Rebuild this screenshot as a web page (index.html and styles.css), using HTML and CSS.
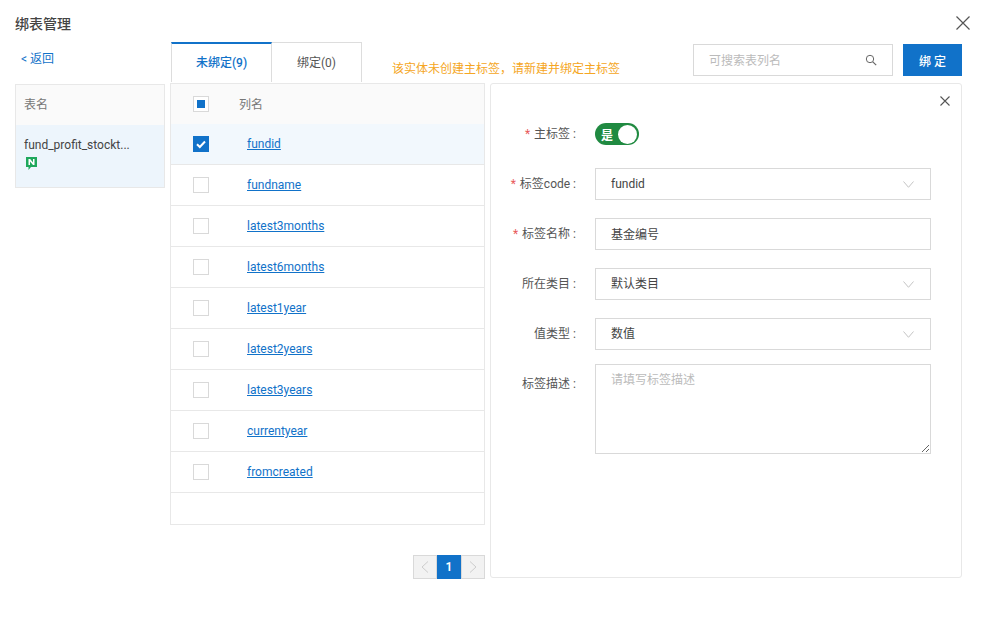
FILE: index.html
```html
<!DOCTYPE html>
<html lang="zh-CN">
<head>
  <meta charset="UTF-8">
  <title>绑表管理</title>
  <link rel="stylesheet" href="styles.css">
</head>
<body>

  <div class="dialog">
    <div class="dialog-head">
      <span class="dialog-title">绑表管理</span>
      <svg class="dialog-close" width="14" height="14" viewBox="0 0 14 14"><path d="M.5.5l13 13M13.5.5l-13 13" fill="none" stroke="#555" stroke-width="1.2"/></svg>
    </div>

    <div class="dialog-body">
      <div class="side">
        <a class="back-link">&lt; 返回</a>
        <div class="side-table">
          <div class="side-head">表名</div>
          <div class="side-row">
            <div class="side-name">fund_profit_stockt...</div>
            <svg class="side-icon" width="11" height="13" viewBox="0 0 11 13">
              <path d="M0 0h11v10H5l-2.500 3V10H0z" fill="#1fa85c"/>
              <path d="M2.500 8V2h1.700L7 5.400V2h1.500v6H7L4 4.500V8z" fill="#fff"/>
            </svg>
          </div>
        </div>
      </div>

      <div class="main">
        <div class="toolbar">
          <div class="tabs">
            <div class="tab active">未绑定(9)</div>
            <div class="tab">绑定(0)</div>
          </div>
          <span class="warning">该实体未创建主标签，请新建并绑定主标签</span>
          <div class="search">
            <span class="search-text">可搜索表列名</span>
            <svg width="12" height="12" viewBox="0 0 12 12"><circle cx="5" cy="5" r="3.700" fill="none" stroke="#666" stroke-width="1"/><path d="M7.800 7.800l3.400 3.400" stroke="#666" stroke-width="1.200"/></svg>
          </div>
          <button class="bind-btn">绑 定</button>
        </div>

        <div class="columns">
          <div class="list">
            <div class="list-table">
              <div class="list-head">
                <span class="check partial"></span>
                <span class="head-name">列名</span>
              </div>
              <div class="list-row selected">
                <span class="check checked">
                  <svg width="16" height="16" viewBox="0 0 16 16"><path d="M4 8.300l2.800 2.700L12 5.500" fill="none" stroke="#fff" stroke-width="2"/></svg>
                </span>
                <a class="col-link">fundid</a>
              </div>
              <div class="list-row"><span class="check"></span><a class="col-link">fundname</a></div>
              <div class="list-row"><span class="check"></span><a class="col-link">latest3months</a></div>
              <div class="list-row"><span class="check"></span><a class="col-link">latest6months</a></div>
              <div class="list-row"><span class="check"></span><a class="col-link">latest1year</a></div>
              <div class="list-row"><span class="check"></span><a class="col-link">latest2years</a></div>
              <div class="list-row"><span class="check"></span><a class="col-link">latest3years</a></div>
              <div class="list-row"><span class="check"></span><a class="col-link">currentyear</a></div>
              <div class="list-row"><span class="check"></span><a class="col-link">fromcreated</a></div>
            </div>
            <div class="pager">
              <span class="page-btn"><svg width="8" height="12" viewBox="0 0 8 12"><path d="M7 .5L1 6l6 5.500" fill="none" stroke="#ccc"/></svg></span>
              <span class="page-btn current">1</span>
              <span class="page-btn"><svg width="8" height="12" viewBox="0 0 8 12"><path d="M1 .5L7 6l-6 5.500" fill="none" stroke="#ccc"/></svg></span>
            </div>
          </div>

          <div class="panel">
            <svg class="panel-close" width="10" height="10" viewBox="0 0 10 10"><path d="M.5.5l9 9M9.500.5l-9 9" fill="none" stroke="#555" stroke-width="1.100"/></svg>
            <div class="form">
              <div class="form-row switch-row">
                <label class="form-label"><em>*</em>主标签 :</label>
                <div class="switch"><span>是</span><i></i></div>
              </div>
              <div class="form-row">
                <label class="form-label"><em>*</em>标签code :</label>
                <div class="select">fundid
                  <svg width="11" height="7" viewBox="0 0 11 7"><path d="M.5.500L5.500 6.300 10.500.5" fill="none" stroke="#c4c4c4"/></svg>
                </div>
              </div>
              <div class="form-row">
                <label class="form-label"><em>*</em>标签名称 :</label>
                <input class="text-input" value="基金编号">
              </div>
              <div class="form-row">
                <label class="form-label">所在类目 :</label>
                <div class="select">默认类目
                  <svg width="11" height="7" viewBox="0 0 11 7"><path d="M.5.500L5.500 6.300 10.500.5" fill="none" stroke="#c4c4c4"/></svg>
                </div>
              </div>
              <div class="form-row">
                <label class="form-label">值类型 :</label>
                <div class="select">数值
                  <svg width="11" height="7" viewBox="0 0 11 7"><path d="M.5.500L5.500 6.300 10.500.5" fill="none" stroke="#c4c4c4"/></svg>
                </div>
              </div>
              <div class="form-row area-row">
                <label class="form-label">标签描述 :</label>
                <textarea class="text-area" placeholder="请填写标签描述"></textarea>
              </div>
            </div>
          </div>
        </div>
      </div>
    </div>
  </div>

</body>
</html>
```

FILE: styles.css
```css
* {
  box-sizing: border-box;
}

body {
  margin: 0;
  background: #fff;
  color: #555;
  font-family: Roboto, "Noto Sans CJK SC", sans-serif;
  font-size: 12px;
}

.dialog {
  width: 982px;
  height: 633px;
  padding: 0 20px 0 15px;
  overflow: hidden;
}

.dialog-head {
  height: 42px;
  display: flex;
  align-items: center;
  justify-content: space-between;
  padding-top: 3px;
}

.dialog-title {
  font-size: 14px;
  font-weight: 500;
  color: #444;
}

.dialog-close {
  margin-right: -8px;
  margin-top: 1px;
}

.dialog-body {
  display: flex;
  gap: 5px;
}

.side {
  width: 150px;
  flex: none;
}

.back-link {
  display: block;
  height: 42px;
  padding: 9px 0 0 6px;
  line-height: 16px;
  color: #1172c9;
}

.side-table {
  border: 1px solid #e8e8e8;
}

.side-head {
  height: 40px;
  line-height: 40px;
  padding-left: 8px;
  background: #fafafa;
  color: #777;
}

.side-row {
  height: 62px;
  padding: 12px 8px 0;
  background: #edf5fc;
  color: #444;
}

.side-name {
  line-height: 16px;
}

.side-icon {
  display: block;
  margin: 4px 0 0 2px;
}

.main {
  width: 792px;
  flex: none;
}

.toolbar {
  height: 41px;
  display: flex;
  align-items: flex-start;
}

.tabs {
  display: flex;
  height: 40px;
  margin-left: 1px;
}

.tab {
  width: 90px;
  border: 1px solid #ddd;
  border-bottom: 0;
  border-left: 0;
  text-align: center;
  line-height: 40px;
}

.tab.active {
  width: 101px;
  border-left: 1px solid #ddd;
  border-top: 2px solid #1172c9;
  line-height: 38px;
  color: #1172c9;
  font-weight: 500;
}

.warning {
  margin: 19px 0 0 30px;
  line-height: 16px;
  color: #f5a623;
}

.search {
  width: 200px;
  height: 32px;
  margin: 2px 0 0 auto;
  padding: 0 15px 0 15px;
  display: flex;
  align-items: center;
  justify-content: space-between;
  border: 1px solid #d9d9d9;
}

.search-text {
  margin-top: -2px;
  color: #bbb;
}

.bind-btn {
  width: 59px;
  height: 32px;
  margin: 2px 0 0 10px;
  border: 0;
  padding: 0;
  background: #1172c9;
  color: #fff;
  font: inherit;
  font-weight: 500;
}

.columns {
  display: flex;
  gap: 5px;
}

.list {
  width: 315px;
  flex: none;
}

.list-table {
  height: 442px;
  border: 1px solid #e8e8e8;
}

.list-head,
.list-row {
  display: flex;
  align-items: center;
  padding-left: 22px;
}

.list-head {
  height: 40px;
  background: #fafafa;
  color: #777;
}

.list-row {
  height: 41px;
  border-bottom: 1px solid #e8e8e8;
}

.list-row.selected {
  background: #f2f8fd;
}

.check {
  width: 16px;
  height: 16px;
  flex: none;
  display: flex;
  align-items: center;
  justify-content: center;
  border: 1px solid #d9d9d9;
  background: #fff;
}

.check.partial::after {
  content: "";
  width: 8px;
  height: 8px;
  background: #1172c9;
}

.check.checked {
  border: 0;
  background: #1172c9;
}

.head-name {
  margin: -2px 0 0 30px;
}

.col-link {
  margin-left: 38px;
  color: #1172c9;
  text-decoration: underline;
}

.pager {
  display: flex;
  justify-content: flex-end;
  margin-top: 30px;
}

.page-btn {
  width: 24px;
  height: 24px;
  display: flex;
  align-items: center;
  justify-content: center;
  border: 1px solid #d9d9d9;
  background: #f2f2f2;
}

.page-btn.current {
  border: 0;
  background: #1172c9;
  color: #fff;
  font-weight: 600;
}

.panel {
  position: relative;
  width: 472px;
  height: 495px;
  flex: none;
  padding-top: 38px;
  border: 1px solid #e8e8e8;
  border-radius: 3px;
}

.panel-close {
  position: absolute;
  top: 12px;
  right: 11px;
}

.form {
  display: flex;
  flex-direction: column;
  gap: 18px;
}

.form-row {
  display: flex;
  align-items: center;
}

.switch-row {
  height: 24px;
  margin-bottom: 4px;
}

.area-row {
  align-items: flex-start;
  margin-top: -4px;
}

.area-row .form-label {
  padding-top: 12px;
}

.form-label {
  width: 85px;
  flex: none;
  margin-right: 19px;
  text-align: right;
  line-height: 16px;
}

.form-label em {
  margin-right: 4px;
  color: #e85a5a;
  font-style: normal;
}

.switch {
  width: 44px;
  height: 22px;
  padding: 0 2px 0 6px;
  display: flex;
  align-items: center;
  justify-content: space-between;
  border-radius: 11px;
  background: #208a41;
  color: #fff;
  font-weight: 600;
}

.switch i {
  width: 19px;
  height: 19px;
  border-radius: 50%;
  background: #fff;
}

.select,
.text-input {
  width: 336px;
  height: 32px;
  border: 1px solid #d9d9d9;
  padding: 0 16px 0 15px;
  color: #444;
  font: inherit;
  line-height: 30px;
}

.select {
  display: flex;
  align-items: center;
  justify-content: space-between;
}

.text-input {
  padding-bottom: 2px;
  outline: 0;
}

.text-area {
  width: 336px;
  height: 90px;
  border: 1px solid #d9d9d9;
  border-radius: 0;
  padding: 5px 15px;
  font: inherit;
  outline: 0;
}

.text-area::placeholder {
  color: #bbb;
}
```
